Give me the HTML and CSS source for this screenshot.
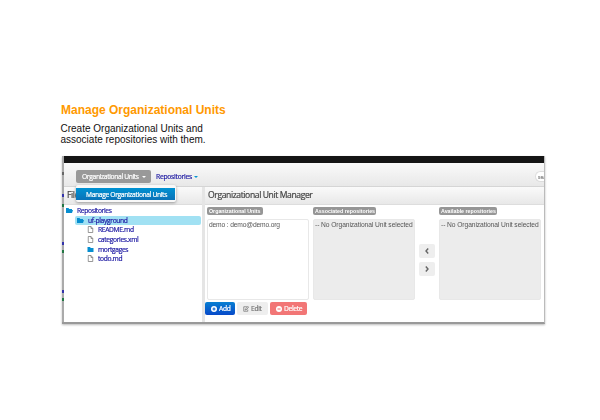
FILE: index.html
```html
<!DOCTYPE html>
<html lang="en">
<head>
<meta charset="utf-8">
<title>Manage Organizational Units</title>
<link rel="stylesheet" href="styles.css">
</head>
<body>
<svg class="defs" aria-hidden="true">
  <symbol id="folder" viewBox="0 0 14 12"><path d="M0 1h5l1.500 2H12v2H14L12 11H0z"/></symbol>
  <symbol id="closed" viewBox="0 0 14 12"><path d="M1 1h5l1.500 2H13v8H1z"/></symbol>
  <symbol id="file" viewBox="0 0 12 14"><path d="M1.500 1H7l3.500 4v8h-9zM7 1v4h3.500" fill="#fff" stroke="#777" stroke-width="1.500"/></symbol>
</svg>
<main class="page">
  <h1>Manage Organizational Units</h1>
  <p class="intro">Create Organizational Units and<br>associate repositories with them.</p>
  <section class="shot">
    <div class="edge"><i class="m1"></i><i class="m2"></i><i class="m3"></i><i class="m4"></i><i class="m5"></i><i class="m6"></i><i class="m7"></i></div>
    <div class="window">
      <div class="topbar"></div>
      <nav class="nav">
        <div class="menu">
          <span class="menu-button"><b>Organizational Units</b><i class="caret"></i></span>
          <span class="dropdown"><b>Manage Organizational Units</b></span>
        </div>
        <span class="repo-link">Repositories<i class="caret"></i></span>
        <span class="search">sea</span>
      </nav>
      <div class="body">
        <aside class="files">
          <header>File</header>
          <ul>
            <li class="root"><svg><use href="#folder"/></svg><span>Repositories</span></li>
            <li class="selected"><svg><use href="#folder"/></svg><span>uf-playground</span></li>
            <li><svg><use href="#file"/></svg><span>README.md</span></li>
            <li><svg><use href="#file"/></svg><span>categories.xml</span></li>
            <li><svg><use href="#closed"/></svg><span>mortgages</span></li>
            <li><svg><use href="#file"/></svg><span>todo.md</span></li>
          </ul>
        </aside>
        <div class="manager">
          <header>Organizational Unit Manager</header>
          <div class="columns">
            <div class="col"><span class="tag tag1">Organizational Units</span><div class="list units">demo : demo@demo.org</div></div>
            <div class="col"><span class="tag tag2">Associated repositories</span><div class="list empty">-- No Organizational Unit selected</div></div>
            <div class="arrows">
              <span><svg viewBox="0 0 6 8"><path d="M4.200 1.500 2 4l2.200 2.500"/></svg></span>
              <span><svg viewBox="0 0 6 8"><path d="M1.800 1.500 4 4 1.800 6.500"/></svg></span>
            </div>
            <div class="col"><span class="tag tag3">Available repositories</span><div class="list empty">-- No Organizational Unit selected</div></div>
          </div>
          <div class="actions">
            <span class="add"><svg viewBox="0 0 12 12"><circle cx="6" cy="6" r="6" fill="#fff"/><path d="M6 3v6M3 6h6" stroke="#075ec9" stroke-width="2.200"/></svg>Add</span>
            <span class="edit"><svg viewBox="0 0 12 12"><path d="M8 1.500H1.500v9h8V7M4.500 8V6L10 .8l1.500 1.500L6 8z" fill="none" stroke="#777" stroke-width="1.500"/></svg>Edit</span>
            <span class="delete"><svg viewBox="0 0 12 12"><circle cx="6" cy="6" r="6" fill="#fff"/><path d="M3 6h6" stroke="#f27676" stroke-width="2.200"/></svg>Delete</span>
          </div>
        </div>
      </div>
    </div>
  </section>
</main>
</body>
</html>
```
FILE: styles.css
```css
* { box-sizing: border-box; }
body { margin: 0; background: #fff; font-family: "Liberation Sans", Arial, sans-serif; }
.defs { display: none; }
.page { width: 600px; height: 420px; padding: 103px 0 0 61px; overflow: hidden; }
h1 { margin: 0; font-size: 12px; line-height: 14px; color: #f90; white-space: nowrap; }
.intro { margin: 6px 0 0 -.5px; font-size: 10px; line-height: 11px; color: #111; }
.shot { display: flex; width: 483px; height: 168px; margin: 11px 0 0 1px; border-bottom: 2px solid #999; border-right: 1px solid #bbb; box-shadow: 0 1px 2px #bbb; }
.edge { width: 2px; flex: none; background: #aaa; padding-top: 16px; }
.edge i { display: block; width: 2px; height: 3px; background: #666; }
.edge .m2 { margin-top: 19px; background: #33a; }
.edge .m3 { margin-top: 7px; background: #274; }
.edge .m4 { margin-top: 35px; background: #33a; }
.edge .m5 { margin-top: 5px; background: #274; }
.edge .m6 { margin-top: 37px; background: #33a; }
.edge .m7 { margin-top: 5px; background: #274; }
.window { width: 480px; height: 166px; overflow: hidden; background: #fff; font-family: "Open Sans", sans-serif; font-size: 6.700px; letter-spacing: -.34px; line-height: 8px; white-space: nowrap; filter: blur(.4px); -webkit-text-stroke: .2px; }
.topbar { height: 7px; background: #151515; }
.nav { display: flex; height: 24px; padding: 7px 0 0 12px; background: linear-gradient(#fafafa, #e8e8e8); border-bottom: 1px solid #d5d5d5; }
.menu { position: relative; width: 75px; }
.menu-button { display: flex; align-items: center; width: 75px; height: 13px; padding-left: 6px; background: #999; border-radius: 2px; color: #fff; }
b { font-weight: 400; }
.caret { display: inline-block; margin-left: 3px; border: solid transparent; border-width: 2px 2px 0; border-top-color: currentColor; }
.dropdown { position: absolute; z-index: 2; left: 0; top: 15px; width: 100px; height: 17px; padding: 3px 1px 2px 0; background: #f8f8f8; border-radius: 2px; box-shadow: 0 1px 3px #999; color: #fff; }
.dropdown b { display: block; height: 12px; padding: 2px 0 0 10px; background: linear-gradient(#0092d2, #0a72b8); line-height: 9px; letter-spacing: -.34px; }
.repo-link { display: flex; align-items: center; height: 13px; margin-left: 5px; color: #2420a5; letter-spacing: -.22px; }
.repo-link .caret { color: #0795d2; margin-left: 2px; }
.search { width: 9px; height: 11px; margin: 1px 0 0 auto; padding: 1px 0 0 2px; overflow: hidden; background: #fff; border: 1px solid #ddd; border-right: 0; border-radius: 6px 0 0 6px; color: #888; font-size: 5px; letter-spacing: 0; }
.body { display: flex; height: 135px; }
.files { width: 138px; flex: none; }
header { height: 18px; padding: 3px 0 0 3px; background: linear-gradient(#fafafa, #e8e8e8); border-bottom: 1px solid #ddd; color: #444; font-size: 8.600px; line-height: 11px; letter-spacing: -.4px; }
ul { margin: 0; padding: 1px 1px 0 2px; list-style: none; }
li { display: flex; align-items: center; height: 9.600px; padding-left: 21px; color: #2420a5; line-height: 9px; }
li svg { width: 7px; height: 7px; margin-right: 4px; fill: #078ed0; }
.root { padding-left: 0; }
.selected { margin: 0 0 .6px 9px; height: 9px; padding-left: 2px; background: #a1e1f3; border-radius: 2px; }
.manager { flex: 1; border-left: 3px solid #e5e5e5; }
.columns { display: flex; height: 97px; padding: 2px 0 0 2px; }
.col { width: 102px; margin-right: 3px; }
.col:nth-child(2) { margin-left: 1px; }
.tag { display: block; height: 8px; padding-left: 2px; margin-bottom: 4px; border-radius: 2px; background: #969696; color: #fff; font: bold 5.300px/8px "Liberation Sans", Arial, sans-serif; letter-spacing: 0; -webkit-text-stroke: 0; }
.tag1 { width: 56px; }
.tag2 { width: 63px; }
.tag3 { width: 58px; }
.list { width: 102px; height: 81px; padding: 1px; border: 1px solid #e8e8e8; border-radius: 2px; color: #555; font: 6.700px/7px "Liberation Sans", Arial, sans-serif; letter-spacing: -.08px; -webkit-text-stroke: 0; }
.units { letter-spacing: -.16px; }
.empty { background: #ececec; }
.arrows { display: flex; flex-direction: column; gap: 4px; width: 16px; margin: 37px 4px 0 1px; }
.arrows span { height: 14px; background: #eee; border-radius: 2px; display: grid; place-items: center; }
.arrows svg { width: 6px; height: 8px; fill: none; stroke: #666; stroke-width: 1.400; }
.actions { display: flex; gap: 2px; }
.actions span { display: flex; align-items: center; height: 13px; border-radius: 2px; padding-left: 6px; color: #fff; }
.actions svg { width: 6px; height: 6px; margin-right: 2px; }
.actions .add { width: 30px; background: linear-gradient(#087fd2, #0749c9); }
.actions .edit { width: 31px; background: #eee; color: #777; }
.actions .delete { width: 37px; background: #f27676; }
```
